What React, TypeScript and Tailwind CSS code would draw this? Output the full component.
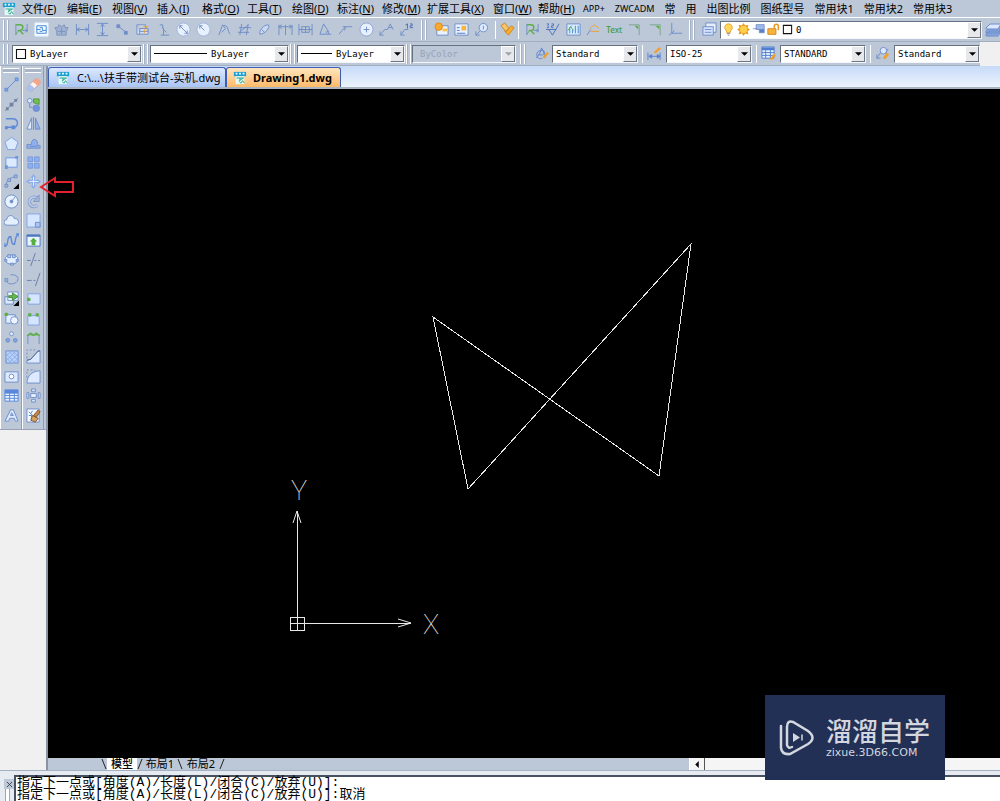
import type { ReactNode } from "react";
import clsx from "clsx";

const LINE = "#6f8ec6";
const GREEN = "#5fae4c";
const ORANGE = "#f0a030";

const icons: Record<string, ReactNode> = {
  logo: (
    <>
      <path d="M1 1h14v5H1z" fill="#1a9fd0" stroke="none" />
      <path d="M3 3h2M7 3h2M11 3h2" stroke="#fff" strokeWidth="2" />
      <path d="M3 6h10v9H3z" fill="#e4faf4" stroke="none" />
      <path d="M4 8h8l-5 3M8 8v3M7 12l2 2 2-3 2 3" stroke="#159b85" />
    </>
  ),
  quickDim: (
    <>
      <path d="M14 2v9M2 2v12M9 9h5M12 7l2 2-2 2" />
      <path d="M2 3h4c5 0 4 5 1 6H4M6 9l4 4" stroke={GREEN} strokeWidth="1.500" />
      <path d="M2 13l3-4" stroke={GREEN} />
    </>
  ),
  window: (
    <>
      <path d="M1 1h14v14H1z" fill="#f2f9ff" stroke="#e7f4ff" />
      <path d="M3 4h10v8H3zM3 8h4M6 6h3M9 6v3h4M6 10h3" stroke="#3f86d6" />
    </>
  ),
  gear: <path d="M1 6h3l1-3 3 2 3-2 1 3h3l-2 4v4H3v-4zM4 10h8M8 6v7" fill="#9fb2d4" stroke="#7d92b8" />,
  linear: <path d="M1.500 2v12M14.500 2v12M2 8h12M5 6L2 8l3 2M11 6l3 2-3 2" />,
  vertical: <path d="M2 1.500h12M2 14.500h12M8 2v12M6 5l2-3 2 3M6 11l2 3 2-3" />,
  aligned: (
    <>
      <path d="M3 4l10 8" />
      <path d="M2 3h3v3H2zM10 10h3v3h-3z" fill={LINE} />
    </>
  ),
  baseline: (
    <>
      <path d="M2 3h9v4M2 3v10h12V7H5v6M5 10h9" fill="#d3e0f6" />
      <path d="M8 5h5v5M10 8v4" stroke={ORANGE} />
    </>
  ),
  ordinate: <path d="M4 3h3v4M8 6v8M5 14h9M8 8l3 3" />,
  circleSlash: (
    <>
      <circle cx="8" cy="8" r="7" fill="#e6f0ff" stroke="#a3b6da" />
      <path d="M4 4l8 8M4 7V4h3M12 9v3H9" />
    </>
  ),
  circleRadius: (
    <>
      <circle cx="8" cy="8" r="7" fill="#e6f0ff" stroke="#a3b6da" />
      <path d="M4 4l5 5M4 7V4h3" />
    </>
  ),
  jog: <path d="M2 14L6 3l3 4-4 4M7 4c5-2 4 6 7 9" />,
  hash: <path d="M5 2L3 14M12 2l-2 12M2 6h13M1 11h12M5 9l7-6" />,
  ellipseTilt: <path d="M3 13c-1-4 4-10 9-10 3 3-4 10-9 10zM5 8l3 3" fill="#c9d8f2" />,
  continued: <path d="M1 3v11M8 3v11M15 3v11M1 5h14M4 3L1 5l3 2M12 3l3 2-3 2" />,
  spacing: <path d="M1 2v12M15 2v12M4 5h8v6H4zM1 8h14M8 5v6" />,
  angle: <path d="M6 2L2 13h12M6 2l5 8M8 11l3-1v3" />,
  leader: <path d="M1 13L8 5h7M5 5l3 0-1 4" />,
  circlePlus: (
    <>
      <circle cx="8" cy="8" r="7" fill="#e6f0ff" stroke="#8ea6d4" />
      <path d="M8 5v6M5 8h6" />
    </>
  ),
  leaderA: <path d="M1 14l5-6h3M9 8l3-6 3 6M10 6h4M1 10v4h4" />,
  leaderNum: (
    <>
      <path d="M2 14l4-6h4M2 10v4h4" />
      <path d="M7 3l2-1v5M12 2h2v2h-2v2h3" stroke="#426bb5" />
    </>
  ),
  blockNew: (
    <>
      <path d="M3 4h12v10H3z" fill="#eaf2ff" />
      <circle cx="5" cy="5" r="4" fill="#f7a92c" stroke="#e48a12" />
      <path d="M9 7h5v3H9z" fill="#f7c54e" stroke="none" />
    </>
  ),
  blockGrid: (
    <>
      <path d="M1 2h14v12H1z" fill="#eaf2ff" />
      <path d="M3 6h3M3 9h3M3 12h9" stroke="#4f79c6" />
      <path d="M8 4h5v5H8z" fill="#f4b63c" stroke="none" />
    </>
  ),
  balloon: (
    <>
      <circle cx="10" cy="6" r="4.500" fill="#dbe8ff" />
      <path d="M10 4v4M7 9l-5 5M2 10v4h4" />
    </>
  ),
  pencil: (
    <>
      <path d="M1 4l4-3 4 5-2 5z" fill="#f5c566" stroke="#cf8522" />
      <path d="M7 10l5-6 3 2-6 8-4-4 2-1z" fill="#f7b02e" stroke="#cf8522" />
    </>
  ),
  check: <path d="M2 2h2l-1 2 1 2H2M7 2h2v2H7v2h2M1 8h11M4 8l4 6 7-12" stroke="#4a72c0" />,
  chart: (
    <>
      <path d="M1 2h14v12H1z" fill="#d9ecff" />
      <path d="M4 12V6l2-2M7 12V8M10 12V4M13 12V4" stroke="#3f87d7" />
      <path d="M2 9l3-4 3 4" stroke={GREEN} />
    </>
  ),
  weld: (
    <>
      <path d="M1 14l4-6" />
      <path d="M4 7l5-4 5 4M5 10h9" stroke={ORANGE} />
    </>
  ),
  corner: (
    <>
      <path d="M2 3h11v11" stroke="#7aa78e" />
      <path d="M8 4h4v4z" fill={GREEN} stroke="none" />
    </>
  ),
  axis: <path d="M4 1v11h11M4 12l3-3M4 12l-3 2" />,
  layers: (
    <>
      <path d="M4 1h11v10H4z" fill="#e4eeff" />
      <path d="M1 5h11v9H1z" fill="#d4e3ff" />
      <path d="M3 8h7M3 11h7" />
    </>
  ),
  layerStack: (
    <>
      <path d="M1 12l4-3h11l-3 5H1zM1 9l4-3h11l-3 5H1z" fill="#86a5de" />
      <path d="M1 6l4-4h11l-3 5H1z" fill="#dbe7ff" />
    </>
  ),
  bulb: (
    <>
      <path d="M8 1a4.500 4.500 0 0 0-3 8l1 3h4l1-3a4.500 4.500 0 0 0-3-8z" fill="#ffd65c" stroke="#dd9d2e" />
      <path d="M6 13h4M7 15h2" stroke="#777" />
    </>
  ),
  sun: (
    <>
      <path d="M8 0l2 3 4-1-1 4 3 2-3 2 1 4-4-1-2 3-2-3-4 1 1-4-3-2 3-2-1-4 4 1z" fill="#e89b23" stroke="none" />
      <circle cx="8" cy="8" r="4.500" fill="#ffcf4b" stroke="none" />
    </>
  ),
  viewport: (
    <>
      <path d="M5 2h10v6H5z" fill="#9fb9ea" />
      <path d="M1 7h6M9 8h6v4H9z" fill="#5c7fca" />
    </>
  ),
  lock: (
    <>
      <path d="M1 7h10v7H1z" fill="#f9b33a" stroke="#c97f17" />
      <path d="M9 7V4a2.500 2.500 0 0 1 5 0v5" stroke="#e39a28" strokeWidth="2" />
    </>
  ),
  square: <path d="M2 2h12v12H2z" fill="#fff" stroke="#111" strokeWidth="1.500" />,
  textStyle: (
    <>
      <path d="M2 13C6 10 7 6 8 2c3 4 3 8 4 11M5 9c4 2 7-1 6-3S3 4 3 9s5 5 6 4" stroke="#5c83cf" />
      <path d="M9 12l5-6 2 2-5 5z" fill={ORANGE} stroke="none" />
    </>
  ),
  dimStyle: (
    <>
      <path d="M1 7v8M14 7v8M2 11h12M5 9l-3 2 3 2zM11 9l3 2-3 2z" fill="#5c83cf" stroke="#5c83cf" />
      <path d="M7 7l6-6 2 2-6 5z" fill={ORANGE} stroke="none" />
    </>
  ),
  tableStyle: (
    <>
      <path d="M1 1h13v12H1z" fill="#e8f1ff" stroke="#4f7ed0" />
      <path d="M1 3h13" stroke="#4f7ed0" strokeWidth="3" />
      <path d="M1 7h13M1 10h13M5 3v10M10 3v10" stroke="#4f7ed0" />
      <path d="M9 14l5-6 2 2-4 5z" fill={ORANGE} stroke="none" />
    </>
  ),
  leaderStyle: (
    <>
      <circle cx="9" cy="5" r="3.500" fill="#dbe8ff" />
      <path d="M6 7l-4 6M2 9v4h4M11 8l3-5" />
      <path d="M8 13l5-6 2 2-4 5z" fill={ORANGE} stroke="none" />
    </>
  ),
  line: (
    <>
      <path d="M2 14L14 2" stroke="#5f8bd6" />
      <path d="M1 12h3v3H1zM12 1h3v3h-3z" fill="#86abea" stroke="#5f8bd6" />
    </>
  ),
  xline: (
    <>
      <path d="M1 15L15 1" />
      <path d="M6 6h4v4H6zM2 11h3v3H2zM11 2h3v3h-3z" fill="#7283a0" stroke="none" />
    </>
  ),
  polyline: (
    <>
      <path d="M2 3h7c7 0 7 9 1 9H2" stroke="#5f8bd6" strokeWidth="1.500" />
      <path d="M1 11h3v3H1zM8 10h4v4H8z" fill="#5f8bd6" stroke="none" />
    </>
  ),
  polygon: <path d="M8 1.500l7 5-3 8H4l-3-8z" fill="#dceaff" stroke="#7b9fe0" />,
  rect: (
    <>
      <path d="M2 3h12v10H2z" fill="#dceaff" stroke="#6f96dc" />
      <path d="M1 11h3v4H1zM12 1h3v3h-3z" fill="#6f96dc" stroke="none" />
    </>
  ),
  arc: (
    <>
      <path d="M2 13C2 7 7 3 13 3" />
      <path d="M1 11h3v3H1zM4 5h3v3H4zM11 1h3v3h-3z" fill="#a8bde2" />
      <path d="M16 10v6h-6z" fill="#000" stroke="none" />
    </>
  ),
  circle: (
    <>
      <circle cx="8" cy="8" r="7" fill="#e8f1ff" />
      <circle cx="8" cy="8" r="1.500" fill={LINE} />
      <path d="M8 8l4-5" />
    </>
  ),
  cloud: <path d="M3 13a3 3 0 0 1 0-6c0-5 7-6 8-1 5-1 6 6 2 7z" fill="#e3eeff" />,
  spline: <path d="M1 14c4 1 2-10 5-10s1 8 4 8 1-9 5-10M1 11v4M5 4h3M9 12h3M13 1h3v3" stroke="#5f8bd6" strokeWidth="1.500" />,
  ellipse: (
    <>
      <ellipse cx="8" cy="8" rx="7" ry="5" fill="#e3eeff" />
      <path d="M4 3h3v3H4zM9 3h3v3H9zM1 8h2v2H1zM13 8h2v2h-2zM7 12h3v2H7z" fill="#bcd0f2" />
    </>
  ),
  ellipseArc: (
    <>
      <path d="M7 3c8-1 10 5 6 8-4 3-10 2-11-2" />
      <path d="M1 7h3v3H1z" fill="#a8bde2" />
    </>
  ),
  insert: (
    <>
      <path d="M1 6h9v8H1z" fill="#dceaff" />
      <path d="M4 1h11v9H4z" fill="#eff6ff" />
      <path d="M5 5h4V2l6 4-6 4V7H5z" fill="#65b657" stroke="#418e38" />
      <path d="M16 10v6h-6z" fill="#000" stroke="none" />
    </>
  ),
  makeBlock: (
    <>
      <path d="M2 4h10v9H2z" fill="#e3eeff" />
      <circle cx="11" cy="10" r="4" fill="#edf4ff" />
      <circle cx="2.500" cy="3.500" r="2" fill={GREEN} stroke="none" />
    </>
  ),
  points: (
    <>
      <circle cx="8" cy="4" r="2" fill="#edf4ff" />
      <circle cx="4" cy="11" r="2" fill="#7fa4e4" />
      <circle cx="12" cy="11" r="2" fill="#7fa4e4" />
    </>
  ),
  hatch: (
    <>
      <path d="M2 2h13v13H2z" fill="#b9d0f8" />
      <path d="M2 5l10 10M2 9l6 6M5 2l10 10M9 2l6 6M2 13l2 2M13 2l2 2M2 8l6-6M2 13L13 2M5 15L15 5M10 15l5-5" stroke="#8baeea" />
    </>
  ),
  region: (
    <>
      <path d="M1 3h14v11H1z" fill="#dce9ff" />
      <circle cx="8" cy="8" r="2.500" fill="#fff" />
    </>
  ),
  table: (
    <>
      <path d="M1 2h14v12H1z" fill="#e8f2ff" stroke="#5887db" />
      <path d="M1 2h14v4H1z" fill="#5887db" stroke="none" />
      <path d="M1 8h14M1 11h14M6 5v9M11 5v9" stroke="#5887db" />
    </>
  ),
  text: <path d="M1 14L7 2h3l5 12h-3l-1-3H6l-1 3zM7 8h3L8 5z" fill="#dce9ff" />,
  eraser: (
    <>
      <path d="M1 11L10 2q2-1 4 1t1 4l-9 8q-2 1-4-1t-1-3z" fill="#fff2ec" stroke="#c4a2a2" />
      <path d="M1 11l3-3q3 1 5 4l-3 3q-2 1-4-1t-1-3z" fill="#a8c0f2" stroke="none" />
      <path d="M7 5l3-3q2-1 4 1t1 4l-3 3q-1-3-5-5z" fill="#f6a487" stroke="none" />
    </>
  ),
  copy: (
    <>
      <circle cx="4" cy="4" r="2.500" fill="#dce9ff" />
      <circle cx="11" cy="12" r="3.500" fill="#7293e0" />
      <path d="M8 2h6v6l-3-1-3-1z" fill="#71bd51" stroke="#4f9b37" />
      <path d="M4 7v4h3" />
    </>
  ),
  mirror: (
    <>
      <path d="M6 2v12H1z" fill="#e3edff" />
      <path d="M10 2v12h5z" fill="#8fb0ea" />
      <path d="M8 1v14" />
    </>
  ),
  offset: <path d="M1 13h14v-3h-3V6q-3-5-6 0v3H1zM4 11h8" fill="#91b1ee" />,
  array: <path d="M2 2h5v5H2zM9 2h5v5H9zM2 9h5v5H2zM9 9h5v5H9z" fill="#8fafee" stroke="#789bdc" />,
  move: (
    <>
      <path d="M8 3v10M3 8h10" stroke="#8aabeb" strokeWidth="3" />
      <path d="M5 4l3-4 3 4zM5 12l3 4 3-4zM4 5L0 8l4 3zM12 5l4 3-4 3z" fill="#8aabeb" stroke="none" />
      <path d="M8 3v10M3 8h10" stroke="#e6f0ff" />
    </>
  ),
  rotate: (
    <>
      <path d="M11 4a5 5 0 1 0 1 8" stroke="#8397bd" strokeWidth="3.500" />
      <path d="M11 4a5 5 0 1 0 1 8" stroke="#b9ccf0" strokeWidth="2" />
      <path d="M14 1v7H8z" fill="#9db5e0" stroke="#8397bd" />
    </>
  ),
  scale: (
    <>
      <path d="M1 1h14v14H1z" fill="#d6e5ff" stroke="#7fa2e2" />
      <path d="M10 10h5v5h-5z" fill="#aac4f4" />
    </>
  ),
  stretch: (
    <>
      <path d="M1 2h14v12H1z" fill="#eaf4ff" stroke="#4a77bf" />
      <path d="M1 2h14v2H1z" fill="#4a77bf" stroke="none" />
      <path d="M8 5l4 4h-2v4H6V9H4z" fill="#55ae3e" stroke="none" />
    </>
  ),
  trim: <path d="M10 1L5 15M1 9h4M9 9h2M13 9h2" stroke="#657da8" />,
  extend: <path d="M15 1l-5 14M1 9h5M8 9h2" stroke="#657da8" />,
  breakAt: (
    <>
      <path d="M2 3h13v11H2z" fill="#d6e5ff" stroke="#7fa2e2" />
      <circle cx="3" cy="9" r="2" fill={GREEN} stroke="none" />
    </>
  ),
  breakTwo: (
    <>
      <path d="M2 5h12v10H2z" fill="#d6e5ff" stroke="#7fa2e2" />
      <circle cx="4" cy="4" r="2" fill={GREEN} stroke="none" />
      <circle cx="12" cy="4" r="2" fill={GREEN} stroke="none" />
    </>
  ),
  join: (
    <>
      <path d="M2 5v10M14 5v10" />
      <path d="M1 6l4-3 3 2 3-2 4 3-4-1-3 1-3-1z" fill={GREEN} stroke={GREEN} />
    </>
  ),
  chamfer: (
    <>
      <path d="M1 15v-3l4-1 7-8 3-1v13z" fill="#dce9ff" />
      <path d="M1 10V1h9" strokeDasharray="2 2" />
      <path d="M1 12l4-1 8-9h2" stroke="#51698f" />
    </>
  ),
  fillet: (
    <>
      <path d="M1 15C1 7 7 2 15 2v13z" fill="#dce9ff" />
      <path d="M1 9V1h9" strokeDasharray="2 2" />
    </>
  ),
  explode: (
    <>
      <path d="M5 6h6v4H5z" fill="#e9f2ff" />
      <path d="M6 1h4v3H6zM6 12h4v3H6zM1 5h2v6H1zM13 5h2v6h-2z" fill="#d8e6ff" />
    </>
  ),
  matchProps: (
    <>
      <path d="M1 1h13v14H1z" fill="#f5f9ff" />
      <path d="M3 4l4 4M3 8h3v5M7 3l-2 3" stroke="#4d82cf" />
      <path d="M8 8l5-6 2 2-4 6z" fill="#c2894a" stroke="#80542c" />
      <path d="M7 8l6 3-3 4-5-2z" fill="#d4a265" stroke="#80542c" />
    </>
  ),
};

function Icon({ name, className = "size-[16px]" }: { name: string; className?: string }) {
  return (
    <svg viewBox="0 0 16 16" fill="none" stroke={LINE} className={clsx("shrink-0", className)} aria-hidden="true">
      {icons[name]}
    </svg>
  );
}

function Tool({ name }: { name: string }) {
  return (
    <button type="button" aria-label={name} className="flex h-[18px] w-full items-center justify-center">
      <Icon name={name} className="size-[15px]" />
    </button>
  );
}

function Grip({ className }: { className?: string }) {
  return (
    <div className={clsx("flex h-full shrink-0 items-center justify-center gap-[2px]", className)}>
      <span className="h-[20px] w-[2px] border-l border-white bg-[#a5b1c4]" />
      <span className="h-[20px] w-[2px] border-l border-white bg-[#a5b1c4]" />
    </div>
  );
}

function Combo({ label, value, className, pad = "pl-[3px]", disabled = false, children }: {
  label: string;
  value: string;
  className: string;
  pad?: string;
  disabled?: boolean;
  children?: ReactNode;
}) {
  return (
    <div className={clsx("relative flex h-[18px] border border-[#f4f6f9] border-t-[#68717f] border-l-[#68717f]", disabled ? "bg-[#bcc7d8]" : "bg-white", className)}>
      {children}
      <select
        aria-label={label}
        disabled={disabled}
        className={clsx("h-full w-full appearance-none bg-transparent font-['DejaVu_Sans_Mono',monospace] text-[9px] leading-[16px] outline-none", disabled ? "text-[#98a3b5]" : "text-black", pad)}
      >
        <option>{value}</option>
      </select>
      <span className="pointer-events-none absolute top-0 right-0 flex h-[16px] w-[14px] items-center justify-center border border-[#6f7783] border-t-white border-l-white bg-[#e6e8eb]">
        <svg viewBox="0 0 8 4" className="h-[4px] w-[7px]">
          <path d="M0 0h8L4 4z" fill={disabled ? "#9aa3ae" : "#000"} />
        </svg>
      </span>
    </div>
  );
}

const menus: [string, string][] = [
  ["文件", "F"], ["编辑", "E"], ["视图", "V"], ["插入", "I"], ["格式", "O"], ["工具", "T"], ["绘图", "D"],
  ["标注", "N"], ["修改", "M"], ["扩展工具", "X"], ["窗口", "W"], ["帮助", "H"],
];
const latinMenus = ["APP+", "ZWCADM"];
const blockMenus = ["常", "用", "出图比例", "图纸型号", "常用块1", "常用块2", "常用块3"];

const dimTools = [
  "quickDim", "window", "gear", "linear", "vertical", "aligned", "baseline", "ordinate", "circleSlash", "circleRadius",
  "jog", "hash", "ellipseTilt", "continued", "spacing", "angle", "leader", "circlePlus", "leaderA", "leaderNum",
];
const drawTools = [
  "line", "xline", "polyline", "polygon", "rect", "arc", "circle", "cloud", "spline", "ellipse", "ellipseArc",
  "insert", "makeBlock", "points", "hatch", "region", "table", "text",
];
const modifyTools = [
  "eraser", "copy", "mirror", "offset", "array", "move", "rotate", "scale", "stretch", "trim", "extend",
  "breakAt", "breakTwo", "join", "chamfer", "fillet", "explode", "matchProps",
];

function MenuBar() {
  return (
    <nav className="flex h-[17px] items-center overflow-hidden pl-[2px] text-[11px] leading-[16px] whitespace-nowrap">
      <Icon name="logo" className="mr-[6px] size-[14px]" />
      {menus.map(([name, key]) => (
        <button type="button" key={name} className={clsx("shrink-0 text-left", name.length > 2 ? "w-[66px]" : "w-[45px]")}>
          {name}(<u>{key}</u>)
        </button>
      ))}
      <div className="flex items-center gap-[10px]">
        {latinMenus.map((name) => (
          <button type="button" key={name} className="text-[9px]">{name}</button>
        ))}
        {blockMenus.map((name) => (
          <button type="button" key={name}>{name}</button>
        ))}
      </div>
    </nav>
  );
}

function DimBar() {
  return (
    <div className="flex h-[25px] items-center border-t border-b border-t-white border-b-[#a3afc0]">
      <Grip className="w-[11px]" />
      <div className="grid w-[406px] shrink-0 grid-cols-20">
        {dimTools.map((t) => <Tool key={t} name={t} />)}
      </div>
      <Grip className="w-[14px]" />
      <div className="grid w-[61px] shrink-0 grid-cols-3">
        <Tool name="blockNew" />
        <Tool name="blockGrid" />
        <Tool name="balloon" />
      </div>
      <div className="mx-[3px] w-[24px] shrink-0 border-x border-white">
        <Tool name="pencil" />
      </div>
      <div className="grid w-[164px] shrink-0 grid-cols-8 items-center">
        <Tool name="quickDim" />
        <Tool name="check" />
        <Tool name="chart" />
        <Tool name="weld" />
        <button type="button" className="text-[8px] font-medium text-[#3f9b3f]">Text</button>
        <Tool name="corner" />
        <Tool name="corner" />
        <Tool name="axis" />
      </div>
      <Grip className="w-[12px]" />
      <div className="w-[22px] shrink-0">
        <Tool name="layers" />
      </div>
      <Combo label="图层" value="0" className="flex-1" pad="pl-[3px]">
        <div className="flex items-center gap-[2px] pl-[1px]">
          <Icon name="bulb" className="size-[13px]" />
          <Icon name="sun" className="size-[13px]" />
          <Icon name="viewport" className="size-[13px]" />
          <Icon name="lock" className="size-[13px]" />
          <Icon name="square" className="size-[11px]" />
        </div>
      </Combo>
      <div className="w-[18px] shrink-0 overflow-hidden pl-[3px]">
        <Icon name="layerStack" />
      </div>
    </div>
  );
}

function StyleTool({ name }: { name: string }) {
  return (
    <div className="ml-[4px] w-[24px] shrink-0 border-l border-white">
      <Tool name={name} />
    </div>
  );
}

function PropertyBar() {
  return (
    <div className="flex h-[24px] bg-[#f0f0f0]">
      <div className="flex items-center border-b border-[#a3afc0] bg-[#bcc7d8]">
        <Grip className="w-[12px]" />
        <Combo label="颜色" value="ByLayer" className="w-[130px]">
          <span className="flex items-center pl-[2px]"><Icon name="square" className="size-[12px]" /></span>
        </Combo>
        <Grip className="w-[8px]" />
        <Combo label="线型" value="ByLayer" className="w-[139px]" pad="pl-[4px]">
          <span className="my-auto ml-[3px] h-px w-[53px] shrink-0 bg-black" />
        </Combo>
        <Grip className="w-[8px]" />
        <Combo label="线宽" value="ByLayer" className="w-[108px]" pad="pl-[4px]">
          <span className="my-auto ml-[3px] h-px w-[31px] shrink-0 bg-black" />
        </Combo>
        <Grip className="w-[7px]" />
        <Combo label="打印样式" value="ByColor" className="w-[104px]" pad="pl-[7px]" disabled />
        <Grip className="w-[14px]" />
        <div className="w-[22px] shrink-0"><Tool name="textStyle" /></div>
        <Combo label="文字样式" value="Standard" className="w-[86px]" />
        <StyleTool name="dimStyle" />
        <Combo label="标注样式" value="ISO-25" className="w-[86px]" />
        <StyleTool name="tableStyle" />
        <Combo label="表格样式" value="STANDARD" className="w-[86px]" />
        <StyleTool name="leaderStyle" />
        <Combo label="引线样式" value="Standard" className="w-[86px]" />
      </div>
    </div>
  );
}

function ToolColumn({ tools }: { tools: string[] }) {
  return (
    <div className="flex-1 border-r border-l border-r-[#8f9db3] border-l-white pb-[4px]">
      <div className="mx-[2px] my-[2px] h-[5px] border-y border-white bg-[#aab6c8]" />
      <div className="grid h-[350px] grid-rows-18 items-center">
        {tools.map((t) => <Tool key={t} name={t} />)}
      </div>
    </div>
  );
}

function Drawing() {
  return (
    <svg className="h-full w-full" stroke="#e8e8e8" fill="none" shapeRendering="crispEdges">
      <path d="M385 228L420 400L643 155L611 387Z" />
      <path d="M249 534V422M249 534H363" />
      <path d="M242 528h14v13h-14zM242 534h14M249 528v13" />
      <path d="M245 434l4-12 4 12M350 530l13 4-13 4" shapeRendering="auto" />
      <g fill="#e8e8e8" stroke="none" className="font-['Roboto',sans-serif] text-[27px] font-thin" textAnchor="middle">
        <text x="251" y="411">Y</text>
        <text x="383" y="545">X</text>
      </g>
    </svg>
  );
}

function FileTabs() {
  return (
    <div className="flex h-[23px] items-end border-b-2 border-[#a9b4c2] bg-linear-to-b from-[#c6daf8] to-[#edf3fc] text-[11px] leading-[18px] whitespace-nowrap">
      <button type="button" className="flex h-[20px] w-[178px] items-center gap-[7px] rounded-t-[3px] border border-b-0 border-[#3d5eb0] bg-linear-to-b from-[#dce8fc] to-[#a9c5f5] pl-[7px]">
        <Icon name="logo" className="size-[14px]" />
        C:\...\扶手带测试台-实机.dwg
      </button>
      <button type="button" className="flex h-[20px] w-[115px] items-center gap-[6px] rounded-t-[3px] border border-b-0 border-[#3d5eb0] bg-linear-to-b from-[#ffe6bd] to-[#ffb968] pl-[6px] font-bold">
        <Icon name="logo" className="size-[14px]" />
        Drawing1.dwg
      </button>
    </div>
  );
}

function Slash({ flip = false }: { flip?: boolean }) {
  return (
    <svg viewBox="0 0 6 12" className="h-[12px] w-[6px] shrink-0" stroke="#222">
      <path d={flip ? "M1 1l4 10" : "M5 1L1 11"} />
    </svg>
  );
}

function LayoutTabs() {
  return (
    <div className="flex h-[12px] bg-[#bcc7d8] text-[11px] leading-[12px]">
      <div className="flex flex-1 items-center pl-[53px]">
        <Slash flip />
        <button type="button" className="w-[30px] bg-white text-center font-medium">模型</button>
        <Slash />
        <button type="button" className="w-[34px]">布局1</button>
        <Slash flip />
        <button type="button" className="w-[36px]">布局2</button>
        <Slash />
      </div>
      <button type="button" aria-label="向左滚动" className="flex w-[16px] items-center justify-center border-r border-l border-r-[#555] border-l-white bg-[#f5f5f5]">
        <svg viewBox="0 0 4 8" className="h-[7px] w-[4px]"><path d="M4 0v8L0 4z" /></svg>
      </button>
      <div className="w-[31%] bg-[#f5f5f5]" />
    </div>
  );
}

function CommandLine() {
  return (
    <footer className="h-[31px] border-t border-[#a3b1c2] bg-[#e6ebf2]">
      <div className="flex h-[30px] pt-[4px]">
        <div className="w-[14px] shrink-0 pt-[4px] pl-[4px]">
          <button type="button" aria-label="关闭" className="flex size-[10px] items-center justify-center bg-[#bcc7d8]">
            <svg viewBox="0 0 6 6" className="size-[5px]" stroke="#333"><path d="M0 0l6 6M6 0L0 6" /></svg>
          </button>
          <div className="ml-px h-[12px] w-[5px] border-x border-[#9aa6b8] bg-white" />
        </div>
        <div className="flex-1 border-t-2 border-l-2 border-[#46505e] bg-white pl-[1px] font-['Liberation_Mono','Noto_Sans_CJK_SC',monospace] text-[13px] leading-[12px] whitespace-nowrap">
          <p>指定下一点或[角度(A)/长度(L)/闭合(C)/放弃(U)]:</p>
          <p>指定下一点或[角度(A)/长度(L)/闭合(C)/放弃(U)]:取消</p>
        </div>
      </div>
    </footer>
  );
}

function Watermark() {
  return (
    <div className="absolute right-[55px] bottom-[21px] flex h-[85px] w-[180px] items-center gap-[11px] bg-[#223055] pl-[14px] text-[#d3d6df]">
      <svg viewBox="0 0 36 36" className="size-[36px] shrink-0" fill="none" stroke="currentColor" strokeWidth="2.500" strokeLinecap="round">
        <path d="M2 6v22q1 7 9 6l18-10q9-6 0-13L14 2Q8 0 8 7v18q1 4 5 2" />
        <path d="M14 13v9l7-4.500z" fill="currentColor" stroke="none" />
        <path d="M23 15v5" strokeWidth="1.500" />
      </svg>
      <div className="whitespace-nowrap">
        <p className="text-[26px] leading-[28px] font-medium">溜溜自学</p>
        <p className="pt-[2px] font-['DejaVu_Sans',sans-serif] text-[11px] leading-[11px]">zixue.3D66.COM</p>
      </div>
    </div>
  );
}

export default function App() {
  return (
    <div className="relative flex min-h-screen flex-col overflow-hidden bg-[#bcc7d8] font-['Noto_Sans','Noto_Sans_CJK_SC',sans-serif] text-black">
      <MenuBar />
      <DimBar />
      <PropertyBar />
      <div className="flex flex-1">
        <aside className="flex w-[48px] shrink-0 flex-col border-r-2 border-[#8995a5] bg-[#f0f0f0]">
          <div className="flex border-b border-[#98a4b5] bg-[#bcc7d8] pr-[2px]">
            <ToolColumn tools={drawTools} />
            <ToolColumn tools={modifyTools} />
          </div>
        </aside>
        <main className="flex min-w-0 flex-1 flex-col">
          <FileTabs />
          <div className="flex-1 bg-black">
            <Drawing />
          </div>
          <LayoutTabs />
        </main>
      </div>
      <CommandLine />
      {/* pointer to the move tool */}
      <svg viewBox="0 0 36 22" className="absolute top-[176px] left-[39px] h-[22px] w-[36px]" fill="none" stroke="#e3202b" strokeWidth="2">
        <path d="M2 11L16 2v4h18v10H16v4z" />
      </svg>
      <Watermark />
    </div>
  );
}
